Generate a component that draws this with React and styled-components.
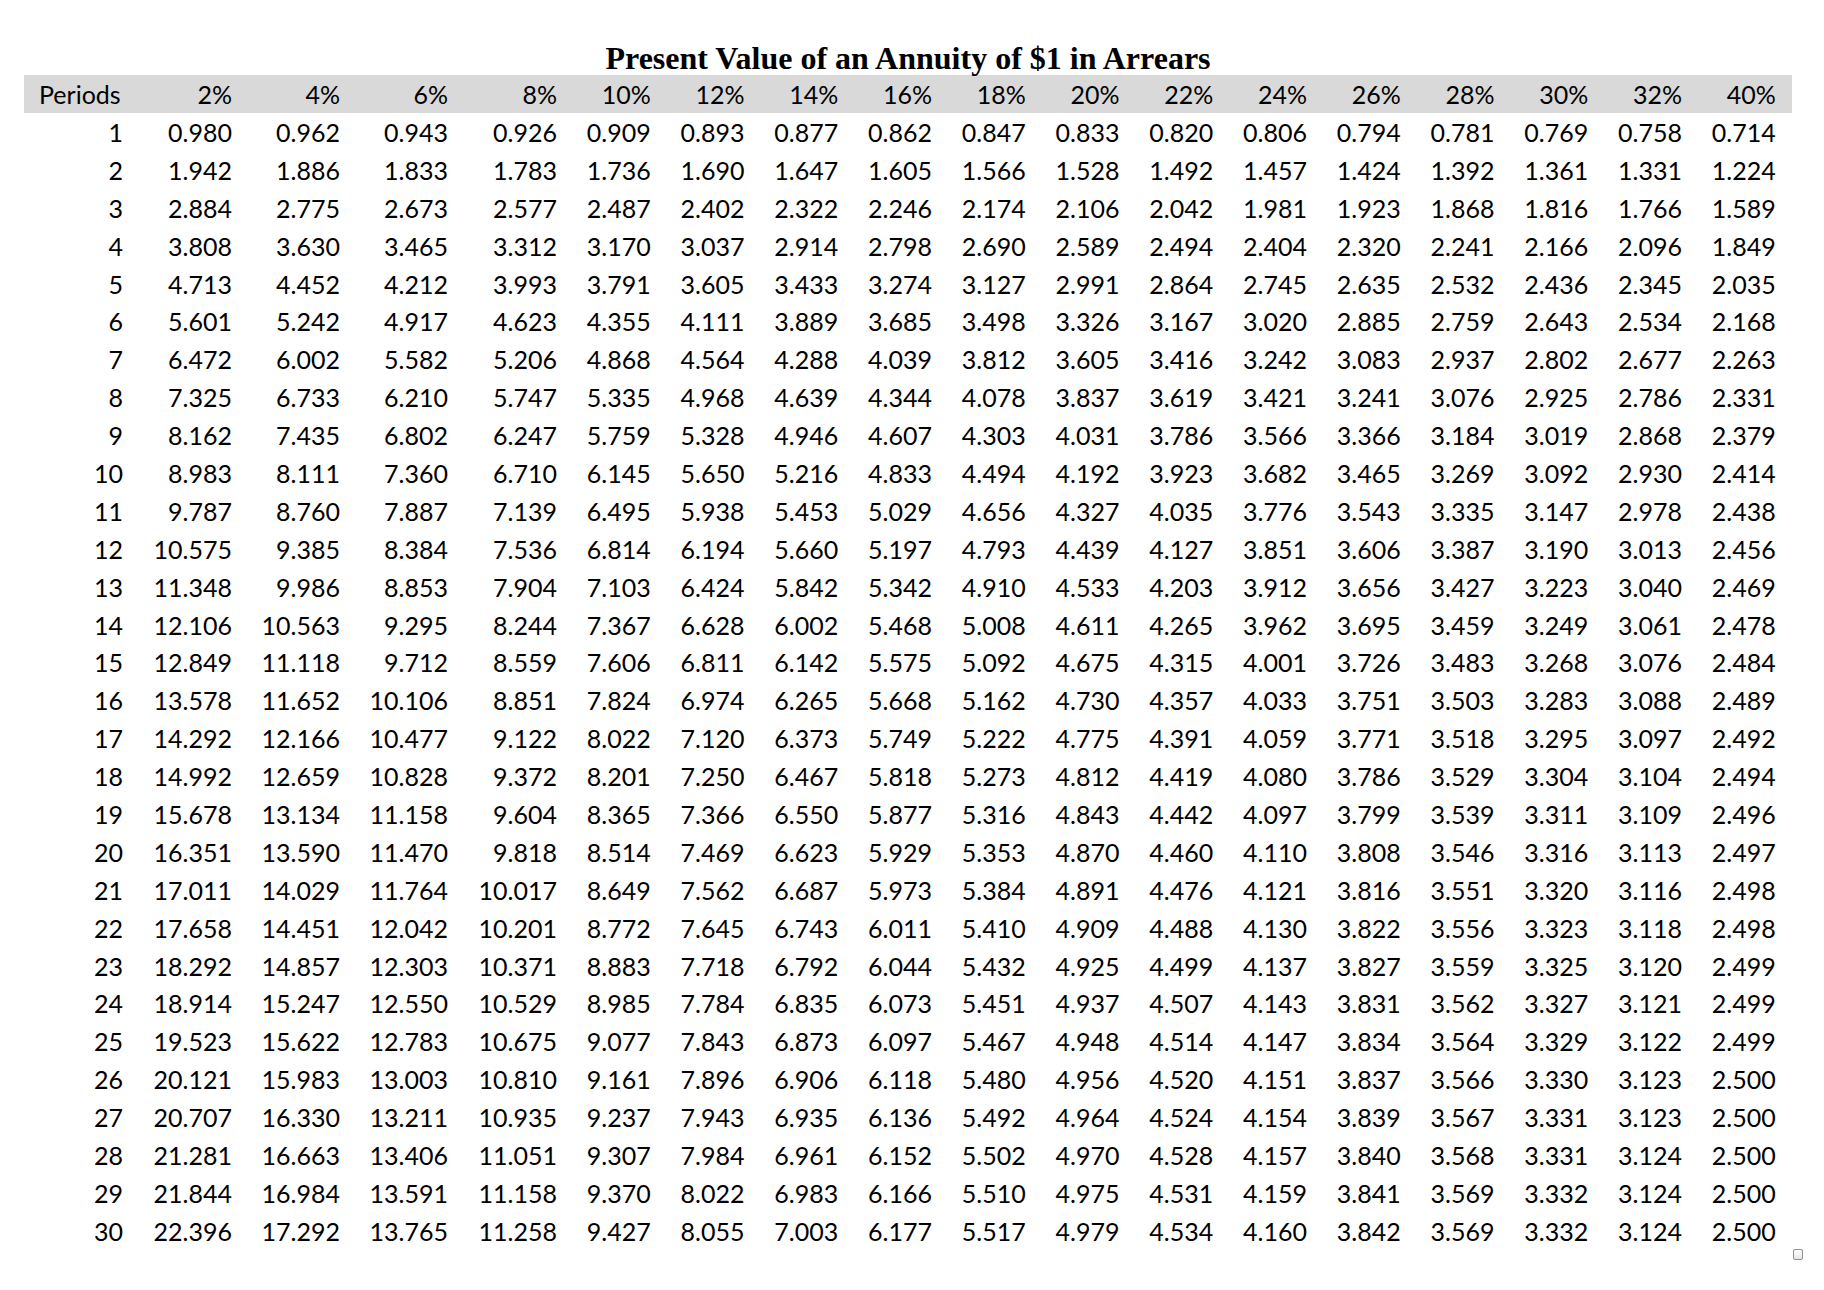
import styled, { createGlobalStyle } from "styled-components";

const GlobalStyle = createGlobalStyle`
  html, body {
    margin: 0;
    padding: 0;
    background: #ffffff;
  }
  body {
    width: 1824px;
    height: 1290px;
    overflow: hidden;
  }
`;

const rates = [2, 4, 6, 8, 10, 12, 14, 16, 18, 20, 22, 24, 26, 28, 30, 32, 40];

const table = [
  "0.980 0.962 0.943 0.926 0.909 0.893 0.877 0.862 0.847 0.833 0.820 0.806 0.794 0.781 0.769 0.758 0.714",
  "1.942 1.886 1.833 1.783 1.736 1.690 1.647 1.605 1.566 1.528 1.492 1.457 1.424 1.392 1.361 1.331 1.224",
  "2.884 2.775 2.673 2.577 2.487 2.402 2.322 2.246 2.174 2.106 2.042 1.981 1.923 1.868 1.816 1.766 1.589",
  "3.808 3.630 3.465 3.312 3.170 3.037 2.914 2.798 2.690 2.589 2.494 2.404 2.320 2.241 2.166 2.096 1.849",
  "4.713 4.452 4.212 3.993 3.791 3.605 3.433 3.274 3.127 2.991 2.864 2.745 2.635 2.532 2.436 2.345 2.035",
  "5.601 5.242 4.917 4.623 4.355 4.111 3.889 3.685 3.498 3.326 3.167 3.020 2.885 2.759 2.643 2.534 2.168",
  "6.472 6.002 5.582 5.206 4.868 4.564 4.288 4.039 3.812 3.605 3.416 3.242 3.083 2.937 2.802 2.677 2.263",
  "7.325 6.733 6.210 5.747 5.335 4.968 4.639 4.344 4.078 3.837 3.619 3.421 3.241 3.076 2.925 2.786 2.331",
  "8.162 7.435 6.802 6.247 5.759 5.328 4.946 4.607 4.303 4.031 3.786 3.566 3.366 3.184 3.019 2.868 2.379",
  "8.983 8.111 7.360 6.710 6.145 5.650 5.216 4.833 4.494 4.192 3.923 3.682 3.465 3.269 3.092 2.930 2.414",
  "9.787 8.760 7.887 7.139 6.495 5.938 5.453 5.029 4.656 4.327 4.035 3.776 3.543 3.335 3.147 2.978 2.438",
  "10.575 9.385 8.384 7.536 6.814 6.194 5.660 5.197 4.793 4.439 4.127 3.851 3.606 3.387 3.190 3.013 2.456",
  "11.348 9.986 8.853 7.904 7.103 6.424 5.842 5.342 4.910 4.533 4.203 3.912 3.656 3.427 3.223 3.040 2.469",
  "12.106 10.563 9.295 8.244 7.367 6.628 6.002 5.468 5.008 4.611 4.265 3.962 3.695 3.459 3.249 3.061 2.478",
  "12.849 11.118 9.712 8.559 7.606 6.811 6.142 5.575 5.092 4.675 4.315 4.001 3.726 3.483 3.268 3.076 2.484",
  "13.578 11.652 10.106 8.851 7.824 6.974 6.265 5.668 5.162 4.730 4.357 4.033 3.751 3.503 3.283 3.088 2.489",
  "14.292 12.166 10.477 9.122 8.022 7.120 6.373 5.749 5.222 4.775 4.391 4.059 3.771 3.518 3.295 3.097 2.492",
  "14.992 12.659 10.828 9.372 8.201 7.250 6.467 5.818 5.273 4.812 4.419 4.080 3.786 3.529 3.304 3.104 2.494",
  "15.678 13.134 11.158 9.604 8.365 7.366 6.550 5.877 5.316 4.843 4.442 4.097 3.799 3.539 3.311 3.109 2.496",
  "16.351 13.590 11.470 9.818 8.514 7.469 6.623 5.929 5.353 4.870 4.460 4.110 3.808 3.546 3.316 3.113 2.497",
  "17.011 14.029 11.764 10.017 8.649 7.562 6.687 5.973 5.384 4.891 4.476 4.121 3.816 3.551 3.320 3.116 2.498",
  "17.658 14.451 12.042 10.201 8.772 7.645 6.743 6.011 5.410 4.909 4.488 4.130 3.822 3.556 3.323 3.118 2.498",
  "18.292 14.857 12.303 10.371 8.883 7.718 6.792 6.044 5.432 4.925 4.499 4.137 3.827 3.559 3.325 3.120 2.499",
  "18.914 15.247 12.550 10.529 8.985 7.784 6.835 6.073 5.451 4.937 4.507 4.143 3.831 3.562 3.327 3.121 2.499",
  "19.523 15.622 12.783 10.675 9.077 7.843 6.873 6.097 5.467 4.948 4.514 4.147 3.834 3.564 3.329 3.122 2.499",
  "20.121 15.983 13.003 10.810 9.161 7.896 6.906 6.118 5.480 4.956 4.520 4.151 3.837 3.566 3.330 3.123 2.500",
  "20.707 16.330 13.211 10.935 9.237 7.943 6.935 6.136 5.492 4.964 4.524 4.154 3.839 3.567 3.331 3.123 2.500",
  "21.281 16.663 13.406 11.051 9.307 7.984 6.961 6.152 5.502 4.970 4.528 4.157 3.840 3.568 3.331 3.124 2.500",
  "21.844 16.984 13.591 11.158 9.370 8.022 6.983 6.166 5.510 4.975 4.531 4.159 3.841 3.569 3.332 3.124 2.500",
  "22.396 17.292 13.765 11.258 9.427 8.055 7.003 6.177 5.517 4.979 4.534 4.160 3.842 3.569 3.332 3.124 2.500",
].map((line) => line.split(" "));

const Page = styled.div`
  position: relative;
  width: 1824px;
  height: 1290px;
  padding: 41px 32px 0 24px;
  box-sizing: border-box;
  font-family: Lato, "Open Sans", sans-serif;
  color: #000;
`;

const Title = styled.h1`
  margin: 0;
  height: 34px;
  width: 1768px;
  text-align: center;
  font-family: "Liberation Serif", "Times New Roman", serif;
  font-weight: 700;
  font-size: 32px;
  line-height: 34px;
  white-space: nowrap;
`;

const Row = styled.div`
  display: grid;
  grid-template-columns: 115px 109px 108px 108px 109px repeat(13, 93.75px);
  width: 1768px;
  height: ${(p) => (p.$head ? "38px" : "37.9px")};
  background: ${(p) => (p.$head ? "#d9d9d9" : "transparent")};
  font-size: 25px;
`;

const Cell = styled.div`
  box-sizing: border-box;
  padding: 1px 16px 0 ${(p) => (p.$left ? "15px" : "0")};
  text-align: ${(p) => (p.$left ? "left" : "right")};
  line-height: 36.9px;
  white-space: nowrap;
`;

const Handle = styled.div`
  position: absolute;
  left: 1793px;
  top: 1249px;
  width: 10px;
  height: 11px;
  box-sizing: border-box;
  border: 1px solid #8f8f8f;
  border-radius: 2px;
  background: linear-gradient(#ffffff, #e6e6e6);
`;

export default function App() {
  return (
    <Page>
      <GlobalStyle />
      <Title>Present Value of an Annuity of $1 in Arrears</Title>
      <Row $head>
        <Cell $left>Periods</Cell>
        {rates.map((r) => (
          <Cell key={r}>{r}%</Cell>
        ))}
      </Row>
      {table.map((vals, i) => (
        <Row key={i}>
          <Cell>{i + 1}</Cell>
          {vals.map((v, j) => (
            <Cell key={j}>{v}</Cell>
          ))}
        </Row>
      ))}
      <Handle />
    </Page>
  );
}
